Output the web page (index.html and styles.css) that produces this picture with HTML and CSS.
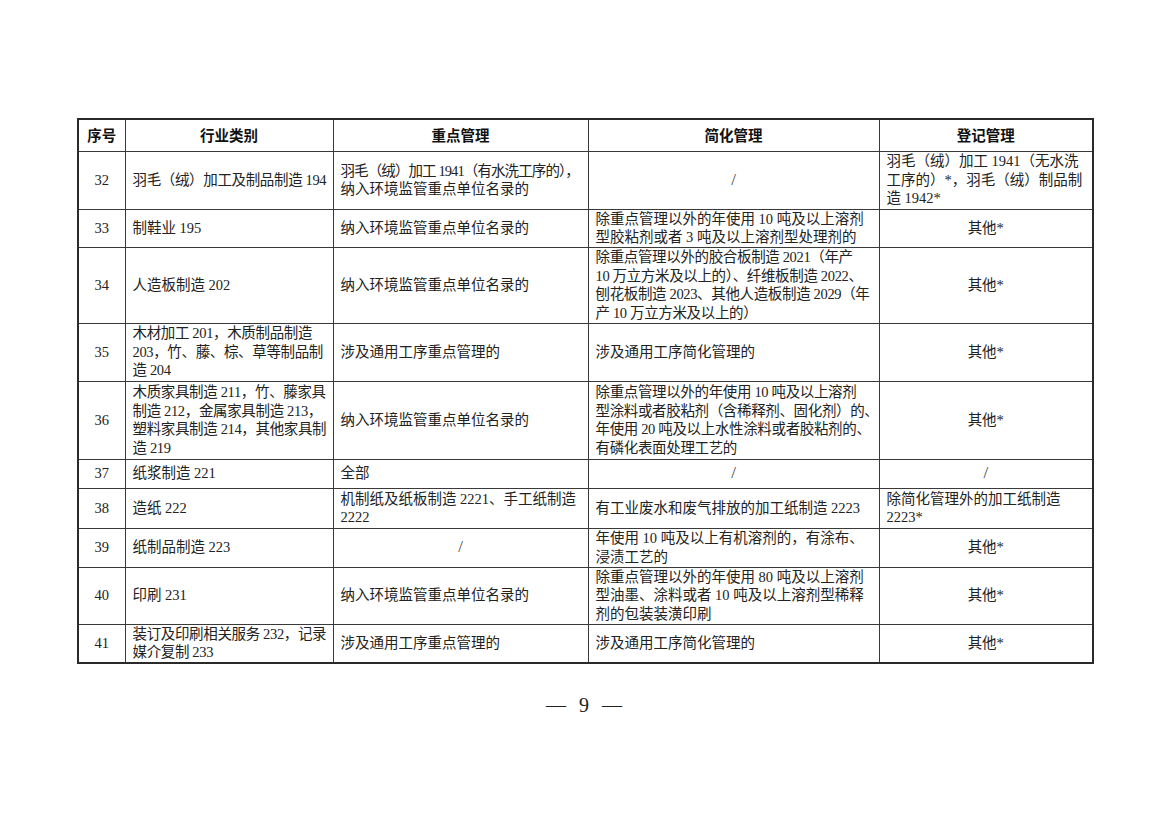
FILE: index.html
```html
<!DOCTYPE html>
<html lang="zh-CN">
<head>
<meta charset="utf-8">
<title>排污许可分类管理名录</title>
<link rel="stylesheet" href="styles.css">
</head>
<body>
<div class="page">
  <table class="tbl">
    <colgroup>
      <col class="c1"><col class="c2"><col class="c3"><col class="c4"><col class="c5">
    </colgroup>
    <thead>
      <tr class="hd">
        <th>序号</th><th>行业类别</th><th>重点管理</th><th>简化管理</th><th>登记管理</th>
      </tr>
    </thead>
    <tbody>
      <tr class="h58">
        <td class="num">32</td>
        <td class="tight">羽毛（绒）加工及制品制造 194</td>
        <td><span class="squeeze">羽毛（绒）加工 1941（有水洗工序的），</span><br>纳入环境监管重点单位名录的</td>
        <td class="ctr slash">/</td>
        <td>羽毛（绒）加工 1941（无水洗<br>工序的）*，羽毛（绒）制品制<br>造 1942*</td>
      </tr>
      <tr class="h38">
        <td class="num">33</td>
        <td>制鞋业 195</td>
        <td>纳入环境监管重点单位名录的</td>
        <td>除重点管理以外的年使用 10 吨及以上溶剂<br>型胶粘剂或者 3 吨及以上溶剂型处理剂的</td>
        <td class="ctr">其他*</td>
      </tr>
      <tr class="h76">
        <td class="num">34</td>
        <td>人造板制造 202</td>
        <td>纳入环境监管重点单位名录的</td>
        <td class="tight">除重点管理以外的胶合板制造 2021（年产<br>10 万立方米及以上的）、纤维板制造 2022、<br>刨花板制造 2023、其他人造板制造 2029（年<br>产 10 万立方米及以上的）</td>
        <td class="ctr">其他*</td>
      </tr>
      <tr class="h58">
        <td class="num">35</td>
        <td class="tight">木材加工 201，木质制品制造<br>203，竹、藤、棕、草等制品制<br>造 204</td>
        <td>涉及通用工序重点管理的</td>
        <td>涉及通用工序简化管理的</td>
        <td class="ctr">其他*</td>
      </tr>
      <tr class="h78">
        <td class="num">36</td>
        <td class="tight">木质家具制造 211，竹、藤家具<br>制造 212，金属家具制造 213，<br>塑料家具制造 214，其他家具制<br>造 219</td>
        <td>纳入环境监管重点单位名录的</td>
        <td class="tight">除重点管理以外的年使用 10 吨及以上溶剂<br>型涂料或者胶粘剂（含稀释剂、固化剂）的、<br>年使用 20 吨及以上水性涂料或者胶粘剂的、<br>有磷化表面处理工艺的</td>
        <td class="ctr">其他*</td>
      </tr>
      <tr class="h29">
        <td class="num">37</td>
        <td>纸浆制造 221</td>
        <td>全部</td>
        <td class="ctr slash">/</td>
        <td class="ctr slash">/</td>
      </tr>
      <tr class="h40">
        <td class="num">38</td>
        <td>造纸 222</td>
        <td>机制纸及纸板制造 2221、手工纸制造<br>2222</td>
        <td>有工业废水和废气排放的加工纸制造 2223</td>
        <td>除简化管理外的加工纸制造<br>2223*</td>
      </tr>
      <tr class="h39">
        <td class="num">39</td>
        <td>纸制品制造 223</td>
        <td class="ctr slash">/</td>
        <td>年使用 10 吨及以上有机溶剂的，有涂布、<br>浸渍工艺的</td>
        <td class="ctr">其他*</td>
      </tr>
      <tr class="h57">
        <td class="num">40</td>
        <td>印刷 231</td>
        <td>纳入环境监管重点单位名录的</td>
        <td>除重点管理以外的年使用 80 吨及以上溶剂<br>型油墨、涂料或者 10 吨及以上溶剂型稀释<br>剂的包装装潢印刷</td>
        <td class="ctr">其他*</td>
      </tr>
      <tr class="h39">
        <td class="num">41</td>
        <td class="tight">装订及印刷相关服务 232，记录<br>媒介复制 233</td>
        <td>涉及通用工序重点管理的</td>
        <td>涉及通用工序简化管理的</td>
        <td class="ctr">其他*</td>
      </tr>
    </tbody>
  </table>
  <div class="pageno">— 9 —</div>
</div>
</body>
</html>
```
FILE: styles.css
```css
html, body {
  margin: 0;
  padding: 0;
  background: #ffffff;
}

.page {
  width: 1169px;
  height: 826px;
  box-sizing: border-box;
  padding: 118px 0 0 77px;
  font-family: "Liberation Serif", "Noto Sans CJK SC", serif;
  color: #222;
}

.tbl {
  border-collapse: collapse;
  table-layout: fixed;
  width: 1015px;
  border: 2px solid #2a2a2a;
}

.c1 { width: 47px; }
.c2 { width: 208px; }
.c3 { width: 255px; }
.c4 { width: 291px; }
.c5 { width: 214px; }

.tbl th,
.tbl td {
  border: 1px solid #3a3a3a;
  padding: 0 2px 0 7px;
  vertical-align: middle;
  font-size: 14.5px;
  line-height: 18.5px;
  white-space: nowrap;
  overflow: hidden;
  text-align: left;
  font-weight: normal;
}

.tbl td.tight {
  letter-spacing: -0.35px;
}

.squeeze {
  letter-spacing: -0.9px;
}

.tbl th {
  font-family: "Noto Sans CJK SC", sans-serif;
  font-weight: bold;
  text-align: center;
  font-size: 14.5px;
  color: #111;
  padding: 0;
}

.tbl td.num,
.tbl td.ctr {
  text-align: center;
  padding: 0;
}

.tbl td.slash {
  font-family: "Liberation Serif", serif;
  font-size: 17px;
  color: #444;
}

.hd { height: 32px; }
.h29 { height: 29px; }
.h38 { height: 38px; }
.h39 { height: 39px; }
.h40 { height: 40px; }
.h57 { height: 57px; }
.h58 { height: 58px; }
.h76 { height: 76px; }
.h78 { height: 78px; }

.pageno {
  width: 1015px;
  text-align: center;
  margin-top: 29px;
  font-family: "Liberation Serif", serif;
  font-size: 20px;
  line-height: 24px;
  color: #222;
  letter-spacing: 1px;
  word-spacing: 6px;
}
```
